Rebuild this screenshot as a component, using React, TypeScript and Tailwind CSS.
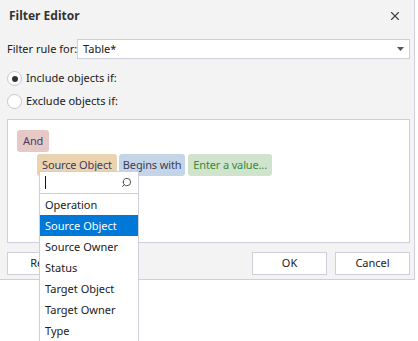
import { X, Search } from 'lucide-react';

const fields = ['Operation', 'Source Object', 'Source Owner', 'Status', 'Target Object', 'Target Owner', 'Type'];

function Radio({ checked, label }: { checked?: boolean; label: string }) {
  return (
    <div className="flex items-center gap-[4px] h-[23px]">
      <div className="w-[15px] h-[15px] rounded-full border border-[#c5c5d3] bg-white flex items-center justify-center">
        {checked && <div className="w-[6px] h-[6px] rounded-full bg-[#333]" />}
      </div>
      <span>{label}</span>
    </div>
  );
}

export default function App() {
  return (
    <div
      className="relative w-[418px] h-[341px] bg-white text-[11px] text-[#202020] overflow-hidden"
      style={{ fontFamily: '"Noto Sans", "Open Sans", sans-serif' }}
    >
      {/* Dialog */}
      <div className="w-[415px] h-[280px] bg-[#f3f3f3] border-r border-b border-[#cfcfdb] flex flex-col">
        {/* Title bar */}
        <div className="h-[32px] flex items-center justify-between pl-[9px] pr-[12px]">
          <span className="font-bold text-[12px] text-[#333]">Filter Editor</span>
          <X className="w-[14px] h-[14px] text-[#444]" strokeWidth={2} />
        </div>

        <div className="flex flex-col px-[7px] pr-[4px]">
          {/* Filter rule row */}
          <div className="flex items-center gap-[4px] mt-[7px] h-[20px]">
            <span className="w-[66px] whitespace-nowrap">Filter rule for:</span>
            <div className="flex-1 h-[20px] bg-white border border-[#cfcfdb] flex items-center justify-between pl-[5px] pr-[5px]">
              <span>Table*</span>
              <svg width="7" height="4" viewBox="0 0 7 4">
                <path d="M0 0 L7 0 L3.5 4 Z" fill="#555" />
              </svg>
            </div>
          </div>

          {/* Radios */}
          <div className="flex flex-col mt-[8px]">
            <Radio checked label="Include objects if:" />
            <Radio label="Exclude objects if:" />
          </div>

          {/* Filter panel */}
          <div className="mt-[6px] h-[124px] bg-white border border-[#cfcfdb] pl-[9px] pt-[10px] flex flex-col gap-[2px] tracking-[-0.15px]">
            <div className="flex">
              <span className="h-[22px] px-[6px] rounded-[3px] bg-[#e6c9c6] text-[#4a3c66] flex items-center">And</span>
            </div>
            <div className="flex gap-[2px] pl-[20px]">
              <span className="h-[22px] px-[5px] rounded-[3px] bg-[#ebd3b2] text-[#3c3c5a] flex items-center">Source Object</span>
              <span className="h-[22px] px-[4px] rounded-[3px] bg-[#c3d5e7] text-[#3c3c5a] flex items-center">Begins with</span>
              <span className="h-[22px] px-[5px] rounded-[3px] bg-[#d0e3cd] text-[#3a8a3a] flex items-center ml-[1px]">Enter a value...</span>
            </div>
          </div>

          {/* Buttons */}
          <div className="flex items-center mt-[9px] gap-[8px]">
            <button className="w-[75px] h-[23px] bg-white border border-[#cfcfdb] flex items-center justify-center">Reset</button>
            <div className="flex-1" />
            <button className="w-[75px] h-[23px] bg-white border border-[#cfcfdb] flex items-center justify-center">OK</button>
            <button className="w-[75px] h-[23px] bg-white border border-[#cfcfdb] flex items-center justify-center">Cancel</button>
          </div>
        </div>
      </div>

      {/* Field dropdown */}
      <div className="absolute left-[39px] top-[171px] w-[100px] h-[175px] bg-white border border-[#cfcfdb] flex flex-col">
        <div className="h-[22px] flex items-center justify-between pl-[5px] pr-[6px] border-b border-[#cfcfdb]">
          <div className="w-px h-[13px] bg-[#111]" />
          <Search className="w-[11px] h-[11px] text-[#444] -scale-x-100" strokeWidth={2} />
        </div>
        {fields.map((f) => (
          <div
            key={f}
            className={`h-[21px] flex items-center pl-[5px] pt-[1px] whitespace-nowrap ${
              f === 'Source Object' ? 'bg-[#0078d7] text-white' : ''
            }`}
          >
            {f}
          </div>
        ))}
      </div>
    </div>
  );
}
